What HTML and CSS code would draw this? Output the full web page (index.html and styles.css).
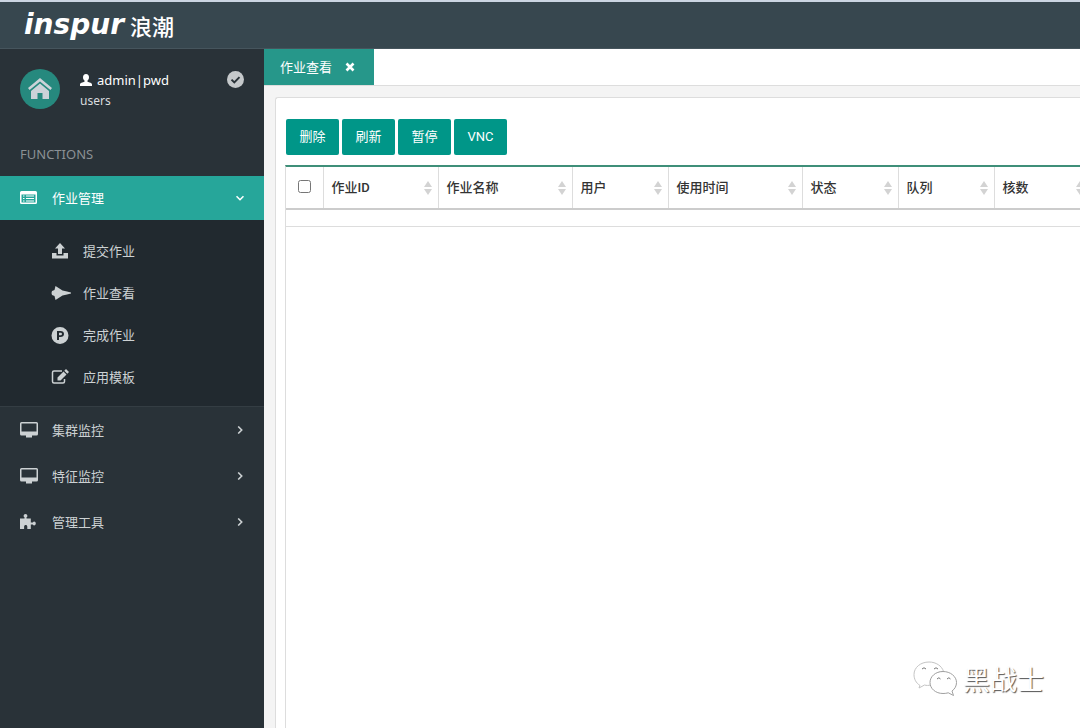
FILE: index.html
```
<!DOCTYPE html>
<html lang="zh-CN">
<head>
<meta charset="utf-8">
<meta name="viewport" content="width=device-width, initial-scale=1">
<title>作业查看</title>
<link rel="stylesheet" href="styles.css">
</head>
<body>
<svg class="defs" width="0" height="0" aria-hidden="true">
  <symbol id="monitor" viewBox="0 0 18 16"><path fill-rule="evenodd" d="M1.500 0h15Q18 0 18 1.500v10.500Q18 13.500 16.500 13.500h-4.500v2h-6v-2H1.500Q0 13.500 0 12V1.500Q0 0 1.500 0zM1.500 1.500v8h15v-8z"/></symbol>
  <symbol id="chevron" viewBox="0 0 8 8"><path d="M2.200 .5 5.700 4 2.200 7.500" fill="none" stroke="currentColor" stroke-width="1.600"/></symbol>
  <symbol id="sort" viewBox="0 0 8 14"><path d="M4 0 8 6H0zM4 14 0 8h8z"/></symbol>
</svg>
<header class="header">
  <a class="brand" href="#"><span class="brand-name">inspur</span><span class="brand-cn">浪潮</span></a>
</header>
<div class="layout">
  <aside class="sidebar">
    <div class="user">
      <span class="avatar"><svg width="24" height="22" viewBox="0 0 24 22"><path d="M12 0 24 10l-1.600 2L12 3.500 1.600 12 0 10z"/><path d="M12 5.500 21 13v8h-6.500v-6h-5v6H3v-8z"/></svg></span>
      <div class="user-info">
        <div class="user-name"><svg width="12" height="12" viewBox="0 0 12 12"><path d="M6 0c2 0 3 1.300 3 3.300C9 5 8.300 6 7.500 6.600v1.100c1.800.6 4.500 1 4.500 2.800V12H0v-1.500c0-1.800 2.700-2.200 4.500-2.800V6.600C3.700 6 3 5 3 3.300 3 1.300 4 0 6 0z"/></svg>admin|pwd</div>
        <div class="user-group">users</div>
      </div>
      <svg class="check" width="17" height="17" viewBox="0 0 17 17"><circle cx="8.500" cy="8.500" r="8.500" fill="#c5c9cb"/><path d="m4.500 8.600 2.800 2.800 5.200-5.300" fill="none" stroke="#293238" stroke-width="2"/></svg>
    </div>
    <h2 class="section">FUNCTIONS</h2>
    <nav>
      <a class="item active" href="#"><svg class="icon" width="18" height="16" viewBox="0 0 18 16"><path fill-rule="evenodd" d="M1.500 1h14Q17 1 17 2.500v10Q17 14 15.500 14h-14Q0 14 0 12.500v-10Q0 1 1.500 1zM1.500 4.500v8h14v-8zM3 5.500h1.500v1H3zm3 0h8v1H6zM3 8h1.500v1H3zm3 0h8v1H6zm-3 2.500h1.500v1H3zm3 0h8v1H6z"/></svg><span>作业管理</span><svg class="arrow down"><use href="#chevron"/></svg></a>
      <div class="submenu">
        <a class="subitem" href="#"><svg class="icon" width="20" height="16" viewBox="0 0 20 16"><path d="m9 0 5 5.500h-3V11H7V5.500H4zM1 10h4.500v2.500h7V10H17v5.500H1z"/></svg><span>提交作业</span></a>
        <a class="subitem" href="#"><svg class="icon" width="20" height="16" viewBox="0 0 20 16"><path d="M4.500 1 11.500 5.500l3.500.8 5 1.200v1l-5 1.200-3.500.8L4.500 15 3.500 11 1 10 .5 8 1 6l2.500-1z"/></svg><span>作业查看</span></a>
        <a class="subitem" href="#"><svg class="icon" width="20" height="17" viewBox="0 0 20 17"><path fill-rule="evenodd" d="M9 0a8.500 8.500 0 1 1 0 17A8.500 8.500 0 0 1 9 0zM6 4v9h2v-3h1.500c2.200 0 3.500-1.200 3.500-3S11.700 4 9.500 4zm2 1.700h1.300c1 0 1.700.4 1.700 1.300s-.7 1.300-1.700 1.300H8z"/></svg><span>完成作业</span></a>
        <a class="subitem" href="#"><svg class="icon" width="20" height="16" viewBox="0 0 20 16"><path d="M11 2H3Q1.500 2 1.500 3.500v9Q1.500 14 3 14h9q1.500 0 1.500-1.500V10" fill="none" stroke="currentColor" stroke-width="1.500"/><path d="m6.500 8.500 6-6 3 3-6 6h-3zM13.300 1.700 15 0l3 3-1.700 1.700z"/></svg><span>应用模板</span></a>
      </div>
      <a class="item" href="#"><svg class="icon" width="18" height="16"><use href="#monitor"/></svg><span>集群监控</span><svg class="arrow"><use href="#chevron"/></svg></a>
      <a class="item" href="#"><svg class="icon" width="18" height="16"><use href="#monitor"/></svg><span>特征监控</span><svg class="arrow"><use href="#chevron"/></svg></a>
      <a class="item" href="#"><svg class="icon" width="18" height="16" viewBox="0 0 18 16"><path d="M0 4.500h4.500V3.300C3.800 2.900 3.600 2.400 3.600 1.900 3.600.8 4.400 0 5.500 0s1.900.8 1.900 1.900c0 .5-.2 1-.9 1.400v1.200h4.300v4h2c.4-.6.8-.9 1.300-.9 1 0 1.700.8 1.700 1.900s-.7 1.900-1.700 1.900c-.5 0-.9-.3-1.300-.9h-2V15H7.300v-2.300c0-1-.7-1.700-1.600-1.700s-1.600.7-1.600 1.700V15H0z"/></svg><span>管理工具</span><svg class="arrow"><use href="#chevron"/></svg></a>
    </nav>
  </aside>
  <main class="main">
    <div class="tabs">
      <div class="tab"><a href="#">作业查看</a><button class="close" type="button" aria-label="关闭"><svg width="10" height="10" viewBox="0 0 10 10"><path d="m1.500 1.500 7 7m0-7-7 7" stroke="currentColor" stroke-width="2.600"/></svg></button></div>
    </div>
    <section class="panel">
      <div class="toolbar">
        <button class="btn" type="button">删除</button>
        <button class="btn" type="button">刷新</button>
        <button class="btn" type="button">暂停</button>
        <button class="btn" type="button">VNC</button>
      </div>
      <div class="grid">
        <table class="jobs">
          <colgroup><col class="w-check"><col class="w-id"><col class="w-wide"><col class="w-narrow"><col class="w-wide"><col class="w-narrow"><col class="w-narrow"><col class="w-narrow"></colgroup>
          <thead><tr>
            <th class="pick"><input type="checkbox" aria-label="全选"></th>
            <th><div class="head">作业ID<svg class="sort"><use href="#sort"/></svg></div></th>
            <th><div class="head">作业名称<svg class="sort"><use href="#sort"/></svg></div></th>
            <th><div class="head">用户<svg class="sort"><use href="#sort"/></svg></div></th>
            <th><div class="head">使用时间<svg class="sort"><use href="#sort"/></svg></div></th>
            <th><div class="head">状态<svg class="sort"><use href="#sort"/></svg></div></th>
            <th><div class="head">队列<svg class="sort"><use href="#sort"/></svg></div></th>
            <th><div class="head">核数<svg class="sort"><use href="#sort"/></svg></div></th>
          </tr></thead>
          <tbody><tr><td colspan="8"></td></tr></tbody>
        </table>
      </div>
    </section>
  </main>
</div>
<div class="watermark">
  <svg width="46" height="36" viewBox="0 0 46 36" fill="#fff" stroke-width="1"><path stroke="#c4c4c4" d="M7 24.500C3 22 1 18 1 13.500 1 6.500 7.500 1 16 1c7 0 13 4 14.500 9.500C22 11 17 17 17.500 24c-2 .6-4 .6-6 0L6 27z"/><path stroke="#a0a0a0" d="M30 10.500c7.500 0 13.500 5 13.500 11 0 3.500-1.700 6.500-4.500 8.500l1.500 4.500-5.200-2.700c-1.700.5-3.300.7-5.300.7-7.500 0-13-5-13-11s5.500-11 13-11z"/><path fill="none" stroke="#777" d="M9 8q2-2.500 4 0m8 0q2-2.500 4 0m-1 10q2-2.500 3.500 0m6.500 0q2-2.500 3.500 0"/></svg>
  <span>黑战士</span>
</div>
</body>
</html>
```
FILE: styles.css
```
* { box-sizing: border-box; }
body {
  margin: 0;
  min-height: 100vh;
  display: flex;
  flex-direction: column;
  overflow: hidden;
  background: #f4f4f4;
  color: #333;
  font: 13px/20px "Noto Sans", "Noto Sans CJK SC", sans-serif;
}
a { color: inherit; text-decoration: none; }
button { font: inherit; color: inherit; border: 0; padding: 0; cursor: pointer; }
svg { fill: currentColor; flex: none; }
.defs { position: absolute; }

.header {
  height: 49px;
  display: flex;
  align-items: center;
  padding: 0 24px;
  background: #37474f;
  border-top: 2px solid #cbd5e2;
  border-bottom: 1px solid #46555d;
}
.brand { display: flex; align-items: center; gap: 6px; color: #fff; }
.brand-name { font: italic 700 28px/32px "DejaVu Sans", sans-serif; }
.brand-cn { font: 500 22px/32px "Noto Sans CJK SC", sans-serif; }

.layout { flex: 1; display: flex; }
.sidebar { width: 264px; flex: none; background: #293238; color: #ccd1d3; }
.user { display: flex; align-items: flex-start; padding: 20px 20px 0; height: 95px; color: #fff; }
.avatar {
  width: 40px;
  height: 40px;
  display: flex;
  align-items: center;
  justify-content: center;
  border-radius: 50%;
  background: #26897e;
  color: #ccd2d8;
}
.user-info { flex: 1; margin-left: 20px; }
.user-name { display: flex; align-items: center; gap: 5px; font-size: 13px; line-height: 22px; }
.user-group { font-size: 12px; color: #dadddf; }
.check { margin-top: 2px; }
.section { margin: 0; padding: 0 20px 12px; font-size: 13px; font-weight: 400; color: #8b9195; }
.item { display: flex; align-items: center; height: 46px; padding: 0 20px; }
.item .icon { margin-right: 14px; }
.item span { flex: 1; }
.item.active { height: 44px; background: #26a69a; color: #fff; }
.arrow { width: 8px; height: 8px; }
.down { transform: rotate(90deg); }
.submenu { padding: 10px 0 8px; background: #21292f; border-bottom: 1px solid #343d43; }
.subitem { display: flex; align-items: center; gap: 12px; height: 42px; padding-left: 51px; }

.main { flex: 1; min-width: 0; display: flex; flex-direction: column; }
.tabs { display: flex; height: 37px; background: #fff; border-bottom: 1px solid #ddd; }
.tab { display: flex; align-items: center; gap: 13px; padding: 0 19px 0 16px; background: #26978a; color: #fff; }
.close { display: flex; background: none; }
.panel {
  flex: 1;
  display: flex;
  flex-direction: column;
  margin: 11px 0 0 11px;
  padding: 21px 0 0 10px;
  background: #fff;
  border: 1px solid #ddd;
  border-width: 1px 0 0 1px;
  border-top-left-radius: 3px;
}
.toolbar { display: flex; gap: 3px; margin-bottom: 10px; }
.btn {
  width: 53px;
  height: 36px;
  border-radius: 2px;
  background: #009688;
  color: #fff;
  font-family: Roboto, "Noto Sans CJK SC", sans-serif;
}
.grid { flex: 1; overflow: hidden; margin-left: -1px; border-left: 1px solid #ddd; border-top: 2px solid #3f8f79; }
.jobs { width: 804px; table-layout: fixed; border-collapse: collapse; }
.w-check { width: 37px; }
.w-id { width: 115px; }
.w-wide { width: 134px; }
.w-narrow { width: 96px; }
th {
  height: 42px;
  padding: 0 6px 0 8px;
  border-right: 1px solid #ddd;
  border-bottom: 2px solid #ccc;
  text-align: left;
  font-weight: 500;
  font-family: Roboto, "Noto Sans CJK SC", sans-serif;
}
.pick { padding: 0; text-align: center; }
.pick input { margin: 0 0 4px; vertical-align: middle; }
.head { display: flex; align-items: center; justify-content: space-between; }
.sort { width: 8px; height: 14px; color: #d3d3d3; }
td { height: 17px; padding: 0; border-bottom: 1px solid #ddd; }

.watermark {
  position: absolute;
  right: 36px;
  bottom: 29px;
  display: flex;
  align-items: center;
  gap: 4px;
  color: #fff;
  font: 27px/40px "Noto Sans CJK SC", sans-serif;
  text-shadow: 1px 1px 1px #555;
}
```
